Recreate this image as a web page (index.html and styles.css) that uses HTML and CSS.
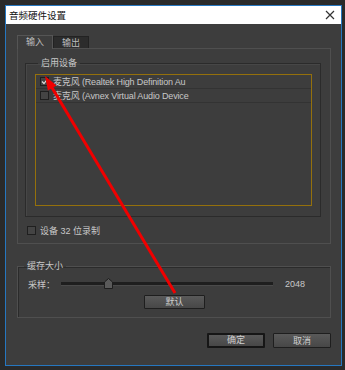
FILE: index.html
```html
<!DOCTYPE html>
<html lang="zh-CN">
<head>
    <meta charset="UTF-8">
    <title>音频硬件设置</title>
    <link rel="stylesheet" href="styles.css">
</head>
<body>
    <div class="dialog">
        <div class="titlebar">
            <span class="title">音频硬件设置</span>
            <svg class="close" width="10" height="10" viewBox="0 0 10 10">
                <path d="M1 1 L9 9 M9 1 L1 9" stroke="#333" stroke-width="1.2"/>
            </svg>
        </div>

        <div class="content">
            <div class="tabs">
                <div class="tab active">输入</div>
                <div class="tab">输出</div>
            </div>
            <div class="panel">
                <fieldset class="group devices">
                    <legend>启用设备</legend>
                    <div class="device-list">
                        <div class="device-row">
                            <span class="check checked">
                                <svg width="7" height="7" viewBox="0 0 7 7"><path d="M1 3.5 L3 5.5 L6.5 1" stroke="#ddd" stroke-width="1.2" fill="none"/></svg>
                            </span>
                            <span class="device-name">麦克风 (Realtek High Definition Au</span>
                        </div>
                        <div class="device-row">
                            <span class="check"></span>
                            <span class="device-name">麦克风 (Avnex Virtual Audio Device</span>
                        </div>
                    </div>
                </fieldset>
                <label class="option">
                    <span class="check"></span>
                    <span>设备 32 位录制</span>
                </label>
            </div>

            <fieldset class="group buffer">
                <legend>缓存大小</legend>
                <div class="slider-row">
                    <span class="slider-label">采样：</span>
                    <div class="slider">
                        <div class="track"></div>
                        <svg class="thumb" width="9" height="11" viewBox="0 0 9 11">
                            <path d="M0.5 10.5 V4 L4.5 0.5 L8.5 4 V10.5 Z" fill="#5a5a5a" stroke="#1e1e1e"/>
                        </svg>
                    </div>
                    <span class="slider-value">2048</span>
                </div>
                <div class="center">
                    <button class="btn default-btn">默认</button>
                </div>
            </fieldset>

            <div class="actions">
                <button class="btn focused">确定</button>
                <button class="btn">取消</button>
            </div>
        </div>
    </div>

    <svg class="arrow" width="345" height="370" viewBox="0 0 345 370">
        <line x1="175" y1="293" x2="51" y2="86" stroke="#f00000" stroke-width="3"/>
        <polygon points="45,76 56.5,85.4 47.9,90.6" fill="#f00000"/>
    </svg>
</body>
</html>
```

FILE: styles.css
```css
body {
    margin: 0;
    padding: 5px 0 0 5px;
    background-color: #2a2a2a;
    font-family: "Liberation Sans", "Noto Sans CJK SC", sans-serif;
    font-size: 9px;
    color: #c8c8c8;
    position: relative;
    height: 365px;
    overflow: hidden;
}
.dialog {
    width: 335px;
    height: 359px;
    border: 1px solid #2677c0;
    background-color: #3d3d3d;
}
.titlebar {
    height: 18px;
    background-color: #ffffff;
    display: flex;
    align-items: center;
    justify-content: space-between;
    padding: 0 6px 0 3px;
}
.title {
    color: #111;
    font-size: 9.5px;
}
.content {
    padding: 11px 10px 0 11px;
}
.tabs {
    display: flex;
    align-items: flex-end;
    height: 13px;
}
.tab {
    width: 36px;
    height: 12px;
    line-height: 12px;
    text-align: center;
    background-color: #2c2c2c;
    border: 1px solid #222;
    border-bottom: none;
    box-sizing: border-box;
    color: #bdbdbd;
}
.tab.active {
    height: 14px;
    margin-bottom: -1px;
    background-color: #3d3d3d;
    border-color: #555;
    position: relative;
    z-index: 1;
}
.panel {
    height: 196px;
    box-sizing: border-box;
    border: 1px solid #4f4f4f;
    padding: 8px 9px 0 7px;
}
.group {
    margin: 0;
    border: 1px solid #2b2b2b;
    box-shadow: inset 1px 1px 0 #474747;
}
.group legend {
    padding: 0 3px;
    margin-left: 3px;
    line-height: 12px;
    color: #c8c8c8;
}
.devices {
    padding: 5px 8px 10px 9px;
}
.device-list {
    height: 132px;
    box-sizing: border-box;
    border: 1px solid #94700c;
}
.device-row {
    height: 14px;
    box-sizing: border-box;
    border-bottom: 1px solid #333;
    display: flex;
    align-items: center;
    gap: 4px;
    padding-left: 4px;
}
.device-name {
    letter-spacing: -0.15px;
}
.check {
    width: 9px;
    height: 9px;
    box-sizing: border-box;
    border: 1px solid #1f1f1f;
    background-color: #444;
    display: flex;
    align-items: center;
    justify-content: center;
}
.option {
    display: flex;
    align-items: center;
    gap: 4px;
    margin-top: 7px;
    margin-left: 2px;
}
.buffer {
    margin-top: 16px;
    padding: 6px 9px 8px 10px;
    border-color: #4f4f4f;
    box-shadow: inset 1px 1px 0 #2b2b2b;
}
.buffer legend {
    margin-left: -4px;
}
.slider-row {
    display: flex;
    align-items: center;
    height: 12px;
}
.slider-label {
    width: 33px;
}
.slider {
    position: relative;
    width: 212px;
    height: 12px;
    display: flex;
    align-items: center;
}
.track {
    width: 100%;
    height: 3px;
    background-color: #1e1e1e;
    border-bottom: 1px solid #4a4a4a;
}
.thumb {
    position: absolute;
    left: 43px;
    top: 0;
}
.slider-value {
    margin-left: 12px;
}
.center {
    display: flex;
    justify-content: center;
    margin-top: 5px;
}
.btn {
    font-family: "Liberation Sans", "Noto Sans CJK SC", sans-serif;
    font-size: 9px;
    color: #cfcfcf;
    height: 14px;
    padding: 0;
    line-height: 12px;
    border: 1px solid #1e1e1e;
    background: linear-gradient(#595959, #474747);
    border-radius: 1px;
}
.default-btn {
    width: 61px;
}
.actions {
    display: flex;
    justify-content: flex-end;
    gap: 8px;
    margin-top: 15px;
}
.actions .btn {
    width: 58px;
    height: 15px;
}
.btn.focused {
    border: 2px solid #161616;
    line-height: 11px;
}
.arrow {
    position: absolute;
    left: 0;
    top: 0;
    pointer-events: none;
}
```
